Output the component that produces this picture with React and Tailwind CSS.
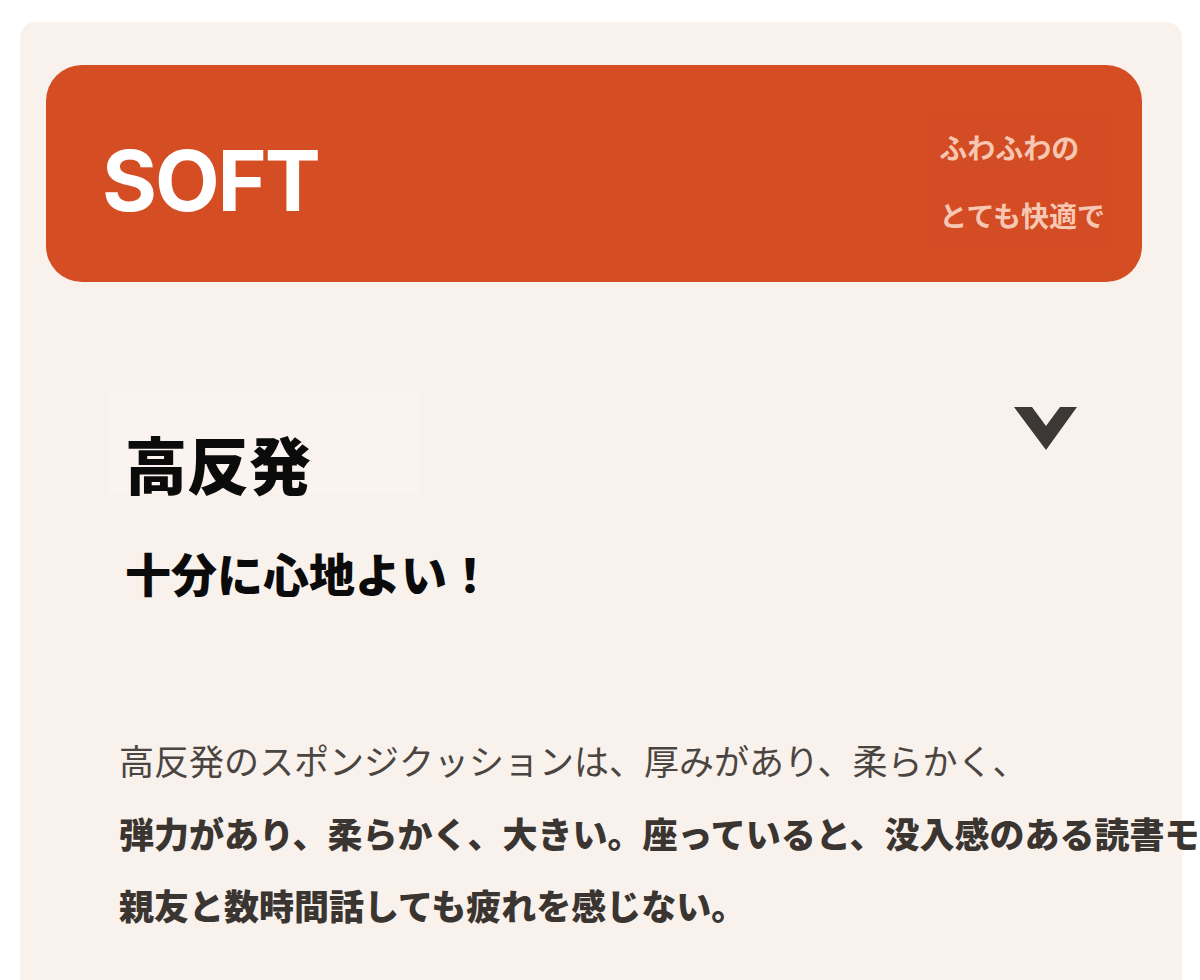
import React from "react";

const jp = "font-['Noto_Sans_CJK_JP','Noto_Sans',sans-serif]";

const ChevronDown = () => (
  <svg width="63" height="43" viewBox="0 0 63 43" className="block">
    <polygon points="0,0 18,0 32,19 46,0 63,0 32,43" fill="#3b3835" />
  </svg>
);

const App = () => {
  return (
    <div className="min-h-screen bg-white pt-[22px] pl-5 overflow-hidden">
      <div className="w-[1162px] min-h-[958px] rounded-t-2xl bg-[#f9f1ec] pt-[43px] pl-[26px]">
        {/* header */}
        <div className="w-[1096px] h-[217px] rounded-[36px] bg-[#d44d23] flex items-center justify-between pt-[15px] pl-[56px] pr-[25px]">
          <h1 className="font-['Inter',sans-serif] font-bold text-white text-[84px] leading-none tracking-[-0.025em]">
            SOFT
          </h1>
          <div
            className={`${jp} px-3 bg-[#d34c23] font-bold text-[28px] leading-[68px] text-[#f8c7b3]`}
          >
            <p>ふわふわの</p>
            <p>とても快適で</p>
          </div>
        </div>

        {/* heading row */}
        <div className={`${jp} w-[1096px] mt-[110px] pl-[62px] pr-[65px] flex justify-between items-start`}>
          <div>
            <div className="w-fit pt-10 px-[17px] pr-[110px] bg-[#faf3ef]">
              <h2 className="text-[62px] leading-[62px] font-black text-[#0b0b0b]">高反発</h2>
            </div>
            <div className="pt-[56px] pb-[34px] px-[17px]">
              <h3 className="text-[46px] leading-[44px] font-black text-[#0b0b0b]">
                十分に心地よい！
              </h3>
            </div>
          </div>
          <button type="button" className="mt-[15px]">
            <ChevronDown />
          </button>
        </div>

        {/* body copy */}
        <div className={`${jp} mt-[96px] pl-[73px] text-[35px] leading-[72.5px] whitespace-nowrap`}>
          <p className="text-[#4b4541]">高反発のスポンジクッションは、厚みがあり、柔らかく、</p>
          <p className="font-black text-[#3b3531]">
            弾力があり、柔らかく、大きい。座っていると、没入感のある読書モードに入れる。
          </p>
          <p className="font-black text-[#3b3531]">親友と数時間話しても疲れを感じない。</p>
        </div>
      </div>
    </div>
  );
};

export default App;
